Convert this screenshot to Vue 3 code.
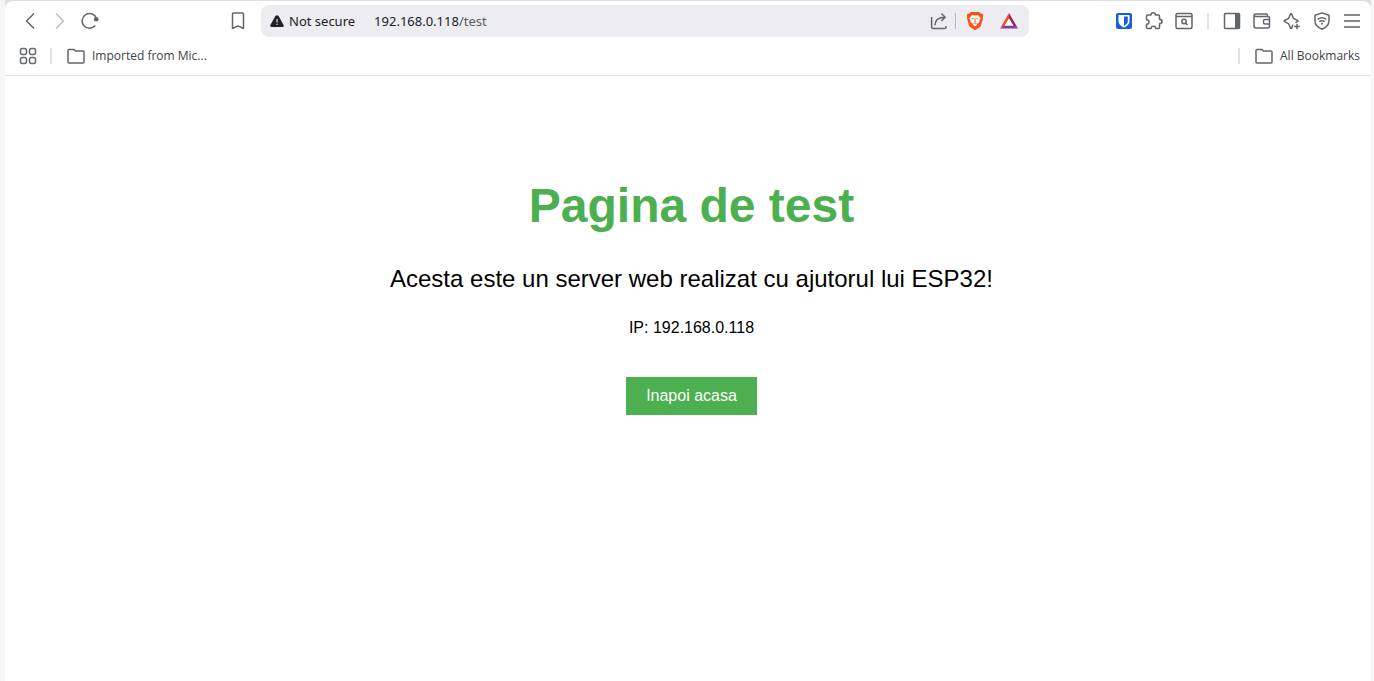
<script setup>
import { ref } from 'vue'

const host = ref('192.168.0.118')
</script>

<template>
  <div class="window">
    <div class="frame">
      <header class="chrome">
        <div class="toolbar">
          <nav class="group navigation" aria-label="Navigation">
            <button class="icon" type="button" aria-label="Back">
              <svg viewBox="0 0 18 18"><path d="M13 1.500 5.500 9l7.500 7.500" /></svg>
            </button>
            <button class="icon disabled" type="button" aria-label="Forward" disabled>
              <svg viewBox="0 0 18 18"><path d="M5 1.500 12.500 9 5 16.500" /></svg>
            </button>
            <button class="icon" type="button" aria-label="Reload">
              <svg viewBox="0 0 18 18"><path d="M14.300 13.500A7.400 7.400 0 1 1 15.400 6" /><circle class="solid" cx="15.200" cy="7.200" r="2.300" /></svg>
            </button>
          </nav>

          <button class="icon" type="button" aria-label="Bookmark this page">
            <svg viewBox="0 0 18 18"><path d="M3.500 2Q3.500 1 4.500 1h9q1 0 1 1v14.500L9 13.800l-5.500 2.700z" /></svg>
          </button>

          <div class="address">
            <button class="security" type="button">
              <svg class="warning" viewBox="0 0 14 12"><path d="M5.600.800Q7-.500 8.400.800L13.600 10q.500 2-1.200 2H1.600Q-.100 12 .400 10z" fill="#202124" /><path d="M7 4v3.500M7 8.700v1.300" stroke="#b5b5bb" stroke-width="1.500" /></svg>
              <span>Not secure</span>
            </button>
            <div class="url"><span>{{ host }}</span><span class="path">/test</span></div>
            <button class="icon" type="button" aria-label="Share">
              <svg viewBox="0 0 18 18"><path d="M1.600 5v10q0 1.600 1.600 1.600h11.200q1.600 0 1.600-1.600v-1M5 13.200C5 8 8 5.200 15 5.200M11.400 1.500l3.800 3.700-3.800 3.700" /></svg>
            </button>
            <span class="divider"></span>
            <button class="icon" type="button" aria-label="Brave Shields">
              <svg class="brand" viewBox="0 0 18 18">
                <path fill="#fb4f14" d="M5 0h8l2 1.800 1.300-.2 1 2-.6 1.800.3 1L15 13.200q-.4 1.300-1.500 2L9.800 17.700q-.8.500-1.600 0L4.500 15.200q-1.100-.7-1.500-2L1 6.400l.3-1-.6-1.800 1-2 1.300.2z" />
                <path fill="#fff" d="M6 2.900l3 .5 3-.5 2.700 3.400-1.400 2.500.2 1.500-2.500 1.500L9 10.900l-2 .9-2.500-1.500.2-1.500-1.400-2.500zM6.500 12.600 9 11.400l2.500 1.200L9 14.600z" />
                <path fill="#fb4f14" d="M5.200 6l2.600.3L6.900 7.500zM12.800 6l-2.600.3.900 1.200zM8.600 6.400h.8v2.900l.8.600-1.200.8-1.200-.8.800-.6z" />
              </svg>
            </button>
            <button class="icon rewards" type="button" aria-label="Brave Rewards">
              <svg class="brand" viewBox="0 0 18 18">
                <path fill="#ff4724" d="M9 1v5.500L4.700 13.500 0 16.500z" />
                <path fill="#9e1f63" d="M9 1l9 15.500-4.700-3L9 6.500z" />
                <path fill="#7a3fa0" d="M0 16.500l4.700-3h8.600l4.700 3z" />
                <path fill="#fff" d="M9 6.500l4.300 7H4.700z" />
              </svg>
            </button>
          </div>

          <div class="group">
            <button class="icon" type="button" aria-label="Bitwarden">
              <svg class="brand" viewBox="0 0 18 18">
                <rect x="1" y="1" width="16" height="16" rx="2" fill="#175ddc" />
                <path fill="#fff" d="M3.500 3h11v6.500q0 3.500-5.500 6.300Q3.500 13 3.500 9.500z" />
                <path fill="#175ddc" d="M9 4.600h3.800v5q0 2.200-3.800 4.300z" />
              </svg>
            </button>
            <button class="icon" type="button" aria-label="Extensions">
              <svg viewBox="0 0 18 18"><path d="M2.500 3H6C6 1.500 7 .800 8.200.800s2.300.7 2.300 2.200h3q1 0 1 1v3.200c1.500 0 2.600 1 2.600 2.300s-1.100 2.300-2.600 2.300v3.700q0 1-1 1h-2.800c0-1.500-1-2.200-2.300-2.200s-2.300.7-2.300 2.200H2.500q-1 0-1-1v-3.200c1.600 0 2.500-1 2.500-2.300s-.9-2.300-2.500-2.300V4q0-1 1-1z" /></svg>
            </button>
            <button class="icon" type="button" aria-label="Search tabs">
              <svg viewBox="0 0 18 18"><rect x="1" y="1.500" width="16" height="15" rx="1.500" /><path d="M1 4.500h16" /><circle cx="9" cy="9.500" r="2.200" /><path d="M10.500 11l2 2" /></svg>
            </button>
            <span class="separator"></span>
            <button class="icon" type="button" aria-label="Sidebar">
              <svg viewBox="0 0 18 18"><rect x="1.500" y="1.500" width="15" height="15" rx="1" /><path class="solid" d="M12 1.500h5v15h-5z" /></svg>
            </button>
            <button class="icon" type="button" aria-label="Wallet">
              <svg viewBox="0 0 18 18"><path d="M14.500 4.500v-1q0-1.500-1.500-1.500H3Q1 2 1 3.300q0 1.200 2 1.200h12q1.500 0 1.500 1.500v8.500q0 1.500-1.500 1.500H3q-2 0-2-2V3.300M16.500 7.500H12q-1.500 0-1.500 1.500v1.500q0 1.500 1.500 1.500h4.500" /></svg>
            </button>
            <button class="icon" type="button" aria-label="Leo AI">
              <svg viewBox="0 0 18 18"><path d="M10 12.700l-1.500 3.500q-.5.900-1 0L5.700 11.800 1.500 9.400q-.7-.4 0-.9L5.700 6.300l1.900-4.500q.4-.8.900 0l1.900 4.500 4.300 2.200q.7.500 0 .9l-2.200 1.300M14 11.800v5.400M11.300 14.500h5.400" /></svg>
            </button>
            <button class="icon" type="button" aria-label="VPN">
              <svg viewBox="0 0 18 18"><path d="M9 .900 16 3.300v5.800c0 4-3 6.500-7 8.100-4-1.600-7-4.100-7-8.100V3.300zM4.800 7.400q4.200-3.200 8.400 0M6.300 9.700q2.700-2 5.400 0" /><circle class="solid" cx="9" cy="11.700" r="1" /></svg>
            </button>
            <button class="icon menu" type="button" aria-label="Menu">
              <svg viewBox="0 0 18 18"><path d="M1 3h16M1 9h16M1 15h16" /></svg>
            </button>
          </div>
        </div>

        <div class="bookmarks">
          <div class="group">
            <button class="icon" type="button" aria-label="Apps">
              <svg viewBox="0 0 18 18"><rect x="1.500" y="1.500" width="6" height="6" rx="2" /><rect x="10.500" y="1.500" width="6" height="6" rx="2" /><rect x="1.500" y="10.500" width="6" height="6" rx="2" /><rect x="10.500" y="10.500" width="6" height="6" rx="2" /></svg>
            </button>
            <span class="separator"></span>
            <button class="folder" type="button">
              <svg viewBox="0 0 18 18"><path d="M1 3.500Q1 2.500 2 2.500h5l1.500 1.500H16q1 0 1 1v10q0 1-1 1H2q-1 0-1-1z" /></svg>
              <span>Imported from Mic...</span>
            </button>
          </div>
          <div class="group">
            <span class="separator"></span>
            <button class="folder" type="button">
              <svg viewBox="0 0 18 18"><path d="M1 3.500Q1 2.500 2 2.500h5l1.500 1.500H16q1 0 1 1v10q0 1-1 1H2q-1 0-1-1z" /></svg>
              <span>All Bookmarks</span>
            </button>
          </div>
        </div>
      </header>

      <main class="page">
        <h1>Pagina de test</h1>
        <p class="lead">Acesta este un server web realizat cu ajutorul lui ESP32!</p>
        <p class="ip">IP: {{ host }}</p>
        <a class="home" href="#">Inapoi acasa</a>
      </main>
    </div>
  </div>
</template>

<style>
body {
  margin: 0;
}
</style>

<style scoped>
.window {
  box-sizing: border-box;
  display: flex;
  min-height: 100vh;
  padding: 0 3px 0 5px;
  background: #f7f7f8;
  font-family: "Noto Sans", "Open Sans", sans-serif;
}

.frame {
  display: flex;
  flex: 1;
  flex-direction: column;
  min-width: 0;
  background: linear-gradient(#dfdfe6 12px, #fff 12px);
}

.chrome {
  margin-top: 1px;
  padding-bottom: 4px;
  border-bottom: 1px solid #e2e2e6;
  border-radius: 8px 8px 0 0;
  background: #fff;
}

button {
  margin: 0;
  padding: 0;
  border: 0;
  background: none;
  color: inherit;
  font: inherit;
}

svg {
  flex: none;
  width: 18px;
  height: 18px;
  fill: none;
  stroke: #62666c;
  stroke-width: 1.5;
  stroke-linejoin: round;
}

.solid {
  fill: #62666c;
  stroke: none;
}

.brand,
.warning {
  stroke: none;
}

.toolbar {
  display: flex;
  align-items: center;
  height: 40px;
  padding: 0 4px 0 10px;
}

.group {
  display: flex;
  align-items: center;
}

.navigation {
  margin-right: 118px;
}

.icon {
  display: flex;
  flex: none;
  align-items: center;
  justify-content: center;
  width: 30px;
  height: 30px;
}

.disabled svg {
  stroke: #bcbec2;
}

.menu svg {
  stroke: #85888c;
  stroke-width: 2;
}

.address {
  box-sizing: border-box;
  display: flex;
  flex: 1;
  align-items: center;
  min-width: 0;
  height: 32px;
  margin: 0 80px 0 8px;
  padding: 0 5px 0 9px;
  border-radius: 8px;
  background: #ededf1;
  color: #202124;
  font-size: 13px;
  line-height: 18px;
}

.security {
  display: flex;
  flex: none;
  align-items: center;
  gap: 5px;
}

.warning {
  width: 14px;
  height: 12px;
}

.url {
  flex: 1;
  min-width: 0;
  margin-left: 19px;
  white-space: nowrap;
}

.path {
  color: #5a5d63;
}

.divider {
  width: 1px;
  height: 16px;
  margin: 0 4px 0 1px;
  background: #b9b9c0;
}

.rewards {
  margin-left: 4px;
}

.separator {
  width: 2px;
  height: 16px;
  margin: 0 8px;
  background: #e2e2e8;
}

.bookmarks {
  display: flex;
  align-items: center;
  justify-content: space-between;
  height: 30px;
  padding: 0 11px 0 8px;
  color: #3f4247;
  font-family: "Open Sans", "Noto Sans", sans-serif;
  font-size: 12px;
  line-height: 16px;
}

.bookmarks .separator {
  margin: 0 7px;
}

.folder {
  display: flex;
  align-items: center;
  gap: 7px;
  margin-left: 8px;
  white-space: nowrap;
}

.page {
  flex: 1;
  padding: 102px 0 40px 7px;
  background: #fff;
  color: #000;
  font-family: "Liberation Sans", Arial, sans-serif;
  text-align: center;
}

h1 {
  margin: 0;
  color: #4caf50;
  font-size: 48px;
  line-height: 56px;
}

p {
  margin: 0;
}

.lead {
  margin-top: 31px;
  font-size: 24px;
  line-height: 28px;
}

.ip {
  margin-top: 25px;
  font-size: 16px;
  line-height: 20px;
}

.home {
  display: inline-block;
  margin-top: 39px;
  padding: 10px 20px;
  background: #4caf50;
  color: #fff;
  font-size: 16px;
  line-height: 18px;
  text-decoration: none;
}
</style>
